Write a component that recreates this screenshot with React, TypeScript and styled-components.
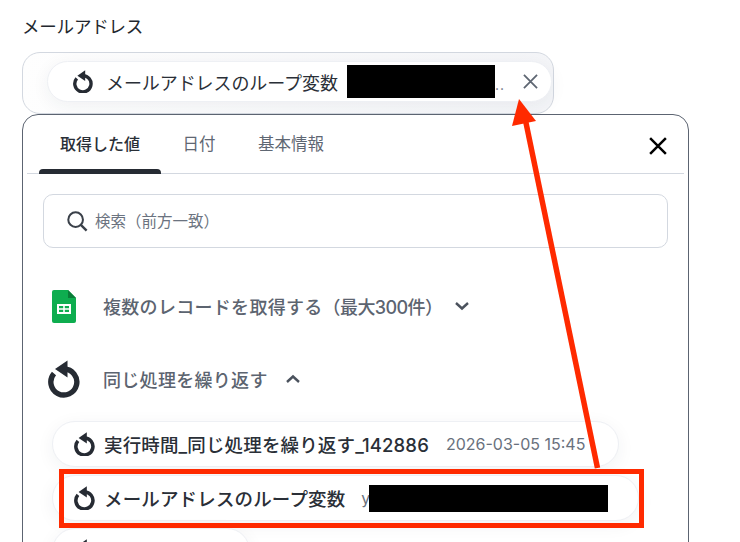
import React from "react";
import styled, { createGlobalStyle } from "styled-components";

const Global = createGlobalStyle`
  html, body { margin: 0; padding: 0; background: #fff; }
  body { font-family: Inter, "Noto Sans CJK JP", sans-serif; color: #262b33; }
`;

const Page = styled.div`
  position: relative;
  width: 740px;
  height: 542px;
  overflow: hidden;
  padding: 15px 51px 0 22px;
  box-sizing: border-box;
`;

const Label = styled.div`
  font-size: 17.5px;
  line-height: 24px;
  letter-spacing: -0.2px;
  font-weight: 400;
  color: #23272e;
  margin-bottom: 13px;
`;

const Field = styled.div`
  width: 532px;
  height: 62px;
  box-sizing: border-box;
  border: 1px solid #d3d8e0;
  border-radius: 18px;
  padding: 8px 1px 0 24px;
  background: linear-gradient(95deg, #fefefe 0%, #f4f5f8 100%);
`;

const Chip = styled.div<{ $width: number; $height?: number; $gap?: number; $pad?: number }>`
  display: flex;
  align-items: center;
  width: ${(p) => p.$width}px;
  height: ${(p) => p.$height ?? 41}px;
  margin-bottom: ${(p) => p.$gap ?? 0}px;
  box-sizing: border-box;
  padding-left: ${(p) => p.$pad ?? 21}px;
  background: #fff;
  border: 1px solid #eef0f4;
  border-radius: 24px;
  box-shadow: 0 4px 18px rgba(40, 50, 70, 0.06);
`;

const ChipName = styled.span<{ $bold?: boolean }>`
  margin-left: ${(p) => (p.$bold ? 9 : 13)}px;
  font-size: ${(p) => (p.$bold ? 18.5 : 18)}px;
  letter-spacing: ${(p) => (p.$bold ? 0.15 : -0.08)}px;
  font-weight: ${(p) => (p.$bold ? 500 : 400)};
  color: #2a2f37;
  white-space: nowrap;
`;

const Redacted = styled.span<{ $w: number; $h: number; $ml: number }>`
  display: block;
  flex: none;
  width: ${(p) => p.$w}px;
  height: ${(p) => p.$h}px;
  margin-left: ${(p) => p.$ml}px;
  background: #000;
`;

const Dots = styled.span`
  font-size: 14px;
  line-height: 14px;
  color: #6b7280;
  margin: 6px 0 0 0;
  letter-spacing: 1px;
`;

const ChipClose = styled.span`
  display: flex;
  margin-left: 18px;
  color: #5e6672;
`;

const Value = styled.span<{ $ml: number }>`
  margin-left: ${(p) => p.$ml}px;
  font-size: 16px;
  color: #69717d;
  white-space: nowrap;
`;

const Popup = styled.div`
  width: 667px;
  height: 460px;
  box-sizing: border-box;
  border: 1px solid #5c6471;
  border-radius: 16px;
  background: #fff;
  padding: 0 4px;
`;

const TabBar = styled.div`
  display: flex;
  align-items: stretch;
  height: 58px;
  border-bottom: 1px solid #d3d8e0;
  padding-left: 12px;
  position: relative;
`;

const Tab = styled.div<{ $active?: boolean; $w: number }>`
  position: relative;
  display: flex;
  align-items: center;
  justify-content: center;
  width: ${(p) => p.$w}px;
  box-sizing: border-box;
  font-size: ${(p) => (p.$active ? 16 : 16.5)}px;
  font-weight: ${(p) => (p.$active ? 500 : 400)};
  color: ${(p) => (p.$active ? "#2a2f37" : "#5f6773")};
  padding-bottom: 3px;
  ${(p) =>
    p.$active
      ? `&::after {
    content: "";
    position: absolute;
    left: 0;
    right: 0;
    bottom: -1px;
    height: 5px;
    background: #262b33;
    border-radius: 4px 4px 0 0;
  }`
      : ""}
`;

const PopupClose = styled.span`
  position: absolute;
  right: 17px;
  top: 22px;
  display: flex;
  color: #000;
`;

const Body = styled.div`
  padding: 20px 16px 0 16px;
`;

const SearchBox = styled.div`
  display: flex;
  align-items: center;
  height: 54px;
  box-sizing: border-box;
  border: 1px solid #d3d8e0;
  border-radius: 10px;
  padding-left: 22px;
  gap: 7px;
  color: #3a4049;
`;

const Placeholder = styled.span`
  font-size: 15.5px;
  color: #6b7380;
  margin-top: -2px;
`;

const Section = styled.div<{ $mt: number; $h: number; $indent: number }>`
  display: flex;
  align-items: center;
  height: ${(p) => p.$h}px;
  margin-top: ${(p) => p.$mt}px;
  padding-left: ${(p) => p.$indent}px;
`;

const SectionTitle = styled.span<{ $ml: number }>`
  margin-left: ${(p) => p.$ml}px;
  font-size: 18px;
  letter-spacing: 0.3px;
  font-weight: 500;
  color: #5c6470;
  white-space: nowrap;
`;

const Tight = styled.span`
  letter-spacing: -0.6px;
`;

const Chevron = styled.span<{ $ml: number }>`
  display: flex;
  margin-left: ${(p) => p.$ml}px;
  color: #4b525d;
`;

const Rows = styled.div`
  margin: 23px 0 0 9px;
  display: flex;
  flex-direction: column;
`;

const Highlight = styled.div`
  position: absolute;
  left: 59px;
  top: 469px;
  width: 585px;
  height: 59px;
  box-sizing: border-box;
  border: 5px solid #ff2a00;
`;

const ArrowLayer = styled.svg`
  position: absolute;
  left: 0;
  top: 0;
  pointer-events: none;
`;

const Repeat = ({ size = 21 }: { size?: number }) => (
  <svg width={size} height={(size * 38) / 32} viewBox="0 0 32 38" fill="none" style={{ flex: "none" }}>
    <path d="M6 13.5 A13 13 0 1 0 16 9" stroke="#262b33" strokeWidth="5.4" strokeLinecap="butt" />
    <path d="M19.5 0.5 L7 9 L19.5 17.5 Z" fill="#262b33" />
  </svg>
);

const Close = ({ size, width }: { size: number; width: number }) => (
  <svg width={size} height={size} viewBox="0 0 16 16" fill="none">
    <path d="M1 1 L15 15 M15 1 L1 15" stroke="currentColor" strokeWidth={width} />
  </svg>
);

const Sheets = () => (
  <svg width="24" height="33" viewBox="0 0 24 33" style={{ flex: "none" }}>
    <path d="M2 0 H16 L24 8 V31 a2 2 0 0 1 -2 2 H2 a2 2 0 0 1 -2 -2 V2 a2 2 0 0 1 2 -2 Z" fill="#0ead4f" />
    <path d="M16 0 L24 8 H16 Z" fill="#0a7d38" />
    <path d="M5 14 H19 V24 H5 Z M7 16 V18.2 H11.2 V16 Z M12.8 16 V18.2 H17 V16 Z M7 19.8 V22 H11.2 V19.8 Z M12.8 19.8 V22 H17 V19.8 Z" fill="#fff" fillRule="evenodd" />
  </svg>
);

const Search = () => (
  <svg width="22" height="22" viewBox="0 0 24 24" fill="none" style={{ flex: "none" }}>
    <circle cx="10.5" cy="10.5" r="8" stroke="currentColor" strokeWidth="2.2" />
    <path d="M16.5 16.5 L22.5 22.5" stroke="currentColor" strokeWidth="2.6" />
  </svg>
);

const Chev = ({ up }: { up?: boolean }) => (
  <svg width="16" height="10" viewBox="0 0 16 10" fill="none">
    <path d={up ? "M2 8 L8 2.5 L14 8" : "M2 2 L8 7.5 L14 2"} stroke="currentColor" strokeWidth="2.4" />
  </svg>
);

export default function App() {
  return (
    <Page>
      <Global />
      <Label>メールアドレス</Label>
      <Field>
        <Chip $width={505} $pad={25}>
          <Repeat size={20} />
          <ChipName>メールアドレスのループ変数</ChipName>
          <Redacted $w={148} $h={33} $ml={9} />
          <Dots>..</Dots>
          <ChipClose><Close size={15} width={1.9} /></ChipClose>
        </Chip>
      </Field>
      <Popup>
        <TabBar>
          <Tab $active $w={122}>取得した値</Tab>
          <Tab $w={76}>日付</Tab>
          <Tab $w={108}>基本情報</Tab>
          <PopupClose><Close size={18} width={2.2} /></PopupClose>
        </TabBar>
        <Body>
          <SearchBox>
            <Search />
            <Placeholder>検索（前方一致）</Placeholder>
          </SearchBox>
          <Section $mt={40} $h={36} $indent={9}>
            <Sheets />
            <SectionTitle $ml={27}>複数のレコードを取得する<Tight>（最大300件）</Tight></SectionTitle>
            <Chevron $ml={12}><Chev /></Chevron>
          </Section>
          <Section $mt={36} $h={38} $indent={5}>
            <Repeat size={32} />
            <SectionTitle $ml={23}>同じ処理を繰り返す</SectionTitle>
            <Chevron $ml={17}><Chev up /></Chevron>
          </Section>
          <Rows>
            <Chip $width={567} $height={46} $gap={8}>
              <Repeat />
              <ChipName $bold>実行時間_同じ処理を繰り返す_142886</ChipName>
              <Value $ml={17}>2026-03-05 15:45</Value>
            </Chip>
            <Chip $width={587} $height={46} $gap={7}>
              <Repeat />
              <ChipName $bold>メールアドレスのループ変数</ChipName>
              <Value $ml={16}>y</Value>
              <Redacted $w={239} $h={27} $ml={-1} />
            </Chip>
            <Chip $width={198} $height={46}>
              <Repeat />
            </Chip>
          </Rows>
        </Body>
      </Popup>
      <Highlight />
      <ArrowLayer width="740" height="542" viewBox="0 0 740 542">
        <path d="M597.5 468 L525 118" stroke="#ff2a00" strokeWidth="5.5" fill="none" />
        <path d="M519 99 L512 126 L536 121 Z" fill="#ff2a00" />
      </ArrowLayer>
    </Page>
  );
}
